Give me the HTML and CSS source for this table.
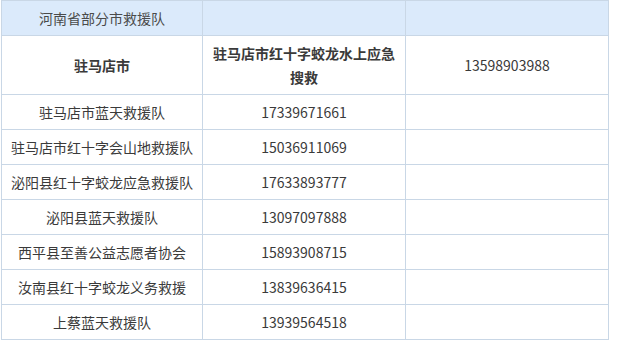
FILE: index.html
```html
<!DOCTYPE html>
<html lang="zh-CN">
<head>
<meta charset="utf-8">
<link rel="stylesheet" href="styles.css">
</head>
<body>
<div class="page">
<table class="rescue">
  <colgroup><col class="c1"><col class="c2"><col class="c3"></colgroup>
  <tr class="head"><td>河南省部分市救援队</td><td></td><td></td></tr>
  <tr class="strong"><td>驻马店市</td><td>驻马店市红十字蛟龙水上应急搜救</td><td class="num">13598903988</td></tr>
  <tr><td>驻马店市蓝天救援队</td><td>17339671661</td><td></td></tr>
  <tr><td>驻马店市红十字会山地救援队</td><td>15036911069</td><td></td></tr>
  <tr><td>泌阳县红十字蛟龙应急救援队</td><td>17633893777</td><td></td></tr>
  <tr><td>泌阳县蓝天救援队</td><td>13097097888</td><td></td></tr>
  <tr><td>西平县至善公益志愿者协会</td><td>15893908715</td><td></td></tr>
  <tr><td>汝南县红十字蛟龙义务救援</td><td>13839636415</td><td></td></tr>
  <tr><td>上蔡蓝天救援队</td><td>13939564518</td><td></td></tr>
</table>
</div>
</body>
</html>
```
FILE: styles.css
```css
html, body {
  margin: 0;
  padding: 0;
  background: #ffffff;
}
.page {
  padding: 0 0 0 1px;
}
.rescue {
  border-collapse: collapse;
  width: 608px;
  table-layout: fixed;
  font-family: "Noto Sans CJK SC", "Noto Sans", sans-serif;
  font-size: 14px;
  color: #3a3a3a;
}
.rescue .c1 { width: 201px; }
.rescue .c2 { width: 203px; }
.rescue .c3 { width: 203px; }
.rescue td {
  border: 1px solid #c9d7e6;
  padding: 5px 4px;
  line-height: 24px;
  text-align: center;
  vertical-align: middle;
}
.rescue .head td {
  background: #dbeafb;
  color: #4a4a4a;
}
.rescue .strong td {
  font-weight: bold;
  padding-left: 8px;
  padding-right: 8px;
}
.rescue .strong td.num {
  font-weight: normal;
}
```
